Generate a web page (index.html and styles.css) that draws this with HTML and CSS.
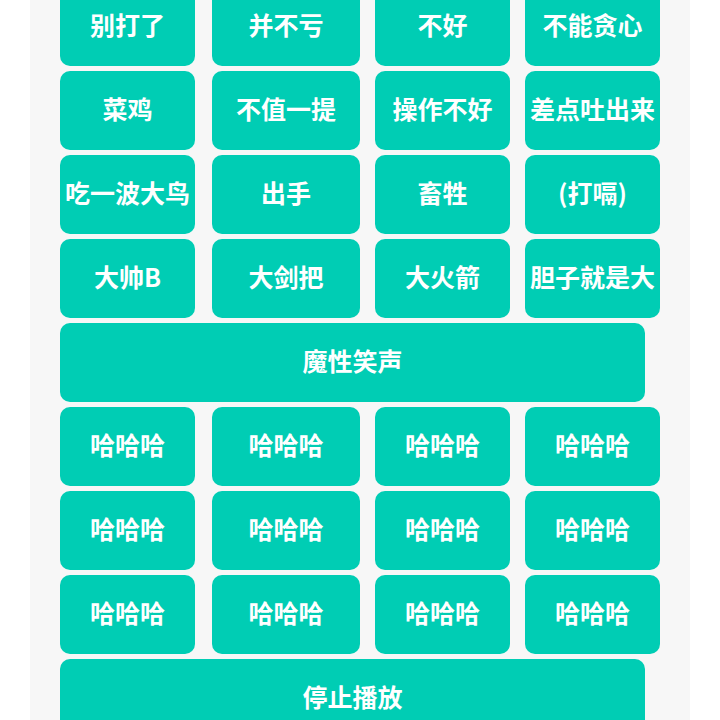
FILE: index.html
```html
<!DOCTYPE html>
<html lang="zh-CN">
<head>
    <meta charset="UTF-8">
    <meta name="viewport" content="width=device-width, initial-scale=1.0">
    <title>音效板</title>
    <link rel="stylesheet" href="styles.css">
</head>
<body>
    <div class="panel">
        <div class="sound-grid">
            <button class="sound">别打了</button>
            <button class="sound mid">并不亏</button>
            <button class="sound">不好</button>
            <button class="sound">不能贪心</button>

            <button class="sound">菜鸡</button>
            <button class="sound mid">不值一提</button>
            <button class="sound">操作不好</button>
            <button class="sound">差点吐出来</button>

            <button class="sound">吃一波大鸟</button>
            <button class="sound mid">出手</button>
            <button class="sound">畜牲</button>
            <button class="sound">(打嗝)</button>

            <button class="sound">大帅B</button>
            <button class="sound mid">大剑把</button>
            <button class="sound">大火箭</button>
            <button class="sound">胆子就是大</button>

            <button class="sound wide">魔性笑声</button>

            <button class="sound">哈哈哈</button>
            <button class="sound mid">哈哈哈</button>
            <button class="sound">哈哈哈</button>
            <button class="sound">哈哈哈</button>

            <button class="sound">哈哈哈</button>
            <button class="sound mid">哈哈哈</button>
            <button class="sound">哈哈哈</button>
            <button class="sound">哈哈哈</button>

            <button class="sound">哈哈哈</button>
            <button class="sound mid">哈哈哈</button>
            <button class="sound">哈哈哈</button>
            <button class="sound">哈哈哈</button>

            <button class="sound wide">停止播放</button>
        </div>
    </div>
</body>
</html>
```

FILE: styles.css
```css
html, body {
    margin: 0;
    padding: 0;
    background-color: #fff;
    overflow: hidden;
}
.panel {
    width: 630px;
    height: 720px;
    margin-left: 30px;
    padding-left: 30px;
    background-color: #f7f7f7;
    overflow: hidden;
}
.sound-grid {
    display: grid;
    grid-template-columns: 152px 163px 150px 135px;
    grid-auto-rows: 79px;
    row-gap: 5px;
    margin-top: -13px;
}
.sound {
    width: 135px;
    height: 79px;
    padding: 0 0 5px;
    border: none;
    border-radius: 10px;
    background-color: #00cdb4;
    color: #fff;
    font-family: "Noto Sans CJK SC", sans-serif;
    font-weight: 600;
    font-size: 25px;
    line-height: 1;
    white-space: nowrap;
    text-align: center;
    cursor: pointer;
}
.sound.mid {
    width: 148px;
}
.sound.wide {
    grid-column: 1 / -1;
    width: 585px;
}
```
